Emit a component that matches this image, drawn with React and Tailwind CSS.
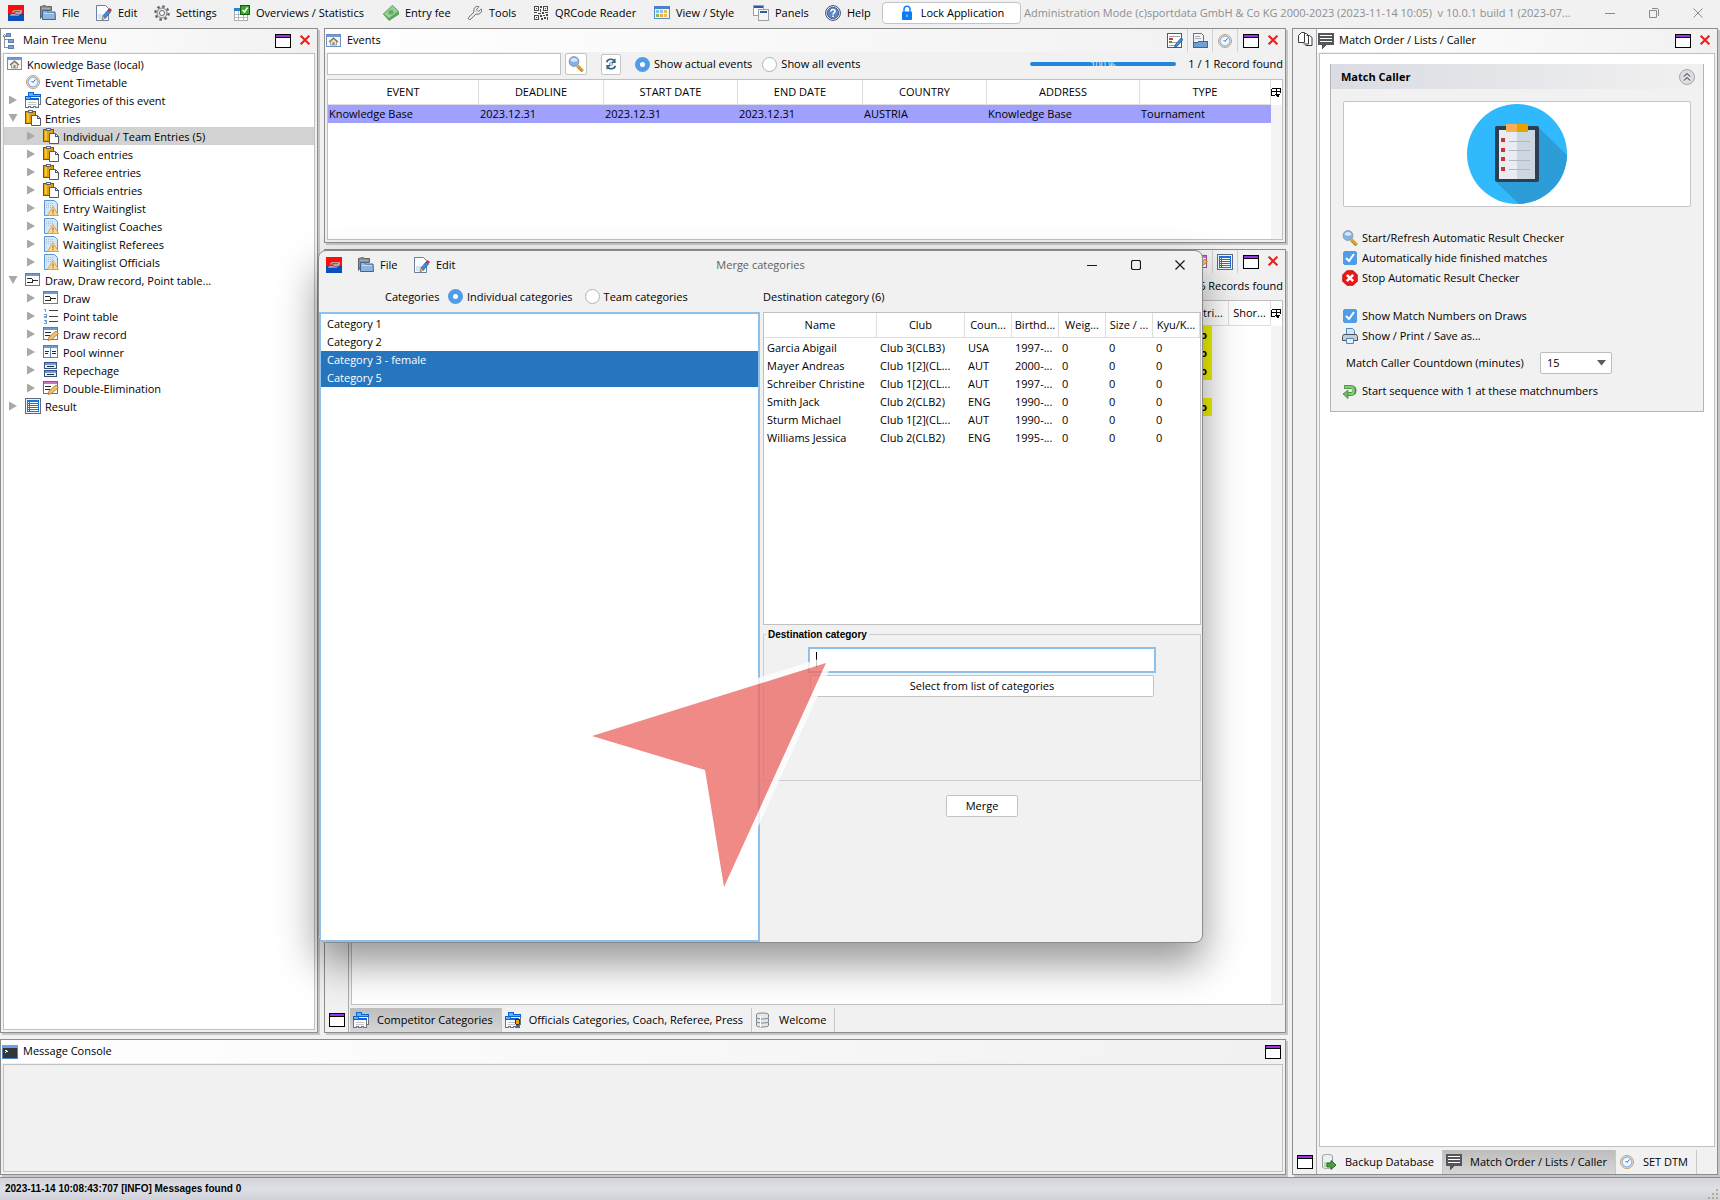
import React, { useState } from 'react';
import clsx from 'clsx';
import { Wrench } from 'lucide-react';

/* ---------- icons ---------- */

const Icon = ({ children, crisp = true, size = 16 }) => (
  <svg
    width={size}
    height={size}
    viewBox="0 0 16 16"
    className="block shrink-0"
    shapeRendering={crisp ? 'crispEdges' : 'auto'}
    aria-hidden="true"
  >
    {children}
  </svg>
);

const LogoIcon = () => (
  <Icon>
    <path fill="#fb0d0d" d="M0 0h16v9H0z" />
    <path fill="#0a4fc0" d="M0 10h16v6H0z" />
    <path fill="#2a3a8c" d="M0 9h16v1H0z" />
    <g shapeRendering="auto">
      <path fill="#b9a3a3" d="M4 6.500 6 5h8v2.500l-1.500 2H8L6 10.500H2L3 9h4l1-1.500H4z" />
      <path fill="#8d5d5d" d="M6 6h6v1H6z" />
      <path fill="#7f93bd" d="M2 10h9v1H2z" />
    </g>
  </Icon>
);

const FolderIcon = () => (
  <Icon crisp={false}>
    <path fill="#8b8f94" stroke="#5e6368" d="M.5 13.500V1.500L5 .5l1.500 1h5v4h-7z" />
    <path stroke="#a9adb1" d="M2 3.500h8M2 5.500h5" />
    <path fill="#8fb4dd" stroke="#3f6593" d="M2.500 14.500v-9h4l1 1.500h7.500l.5 7.500z" />
    <path stroke="#c4daf0" d="M4 8.500h10" />
  </Icon>
);

const EditIcon = () => (
  <Icon crisp={false}>
    <path fill="#fbfcfe" stroke="#6d7f9b" d="M.5.5h9l3 3v12H.5z" />
    <path fill="#d5e4f5" d="M2 9h9v5H2z" />
    <path fill="#3d8ee0" stroke="#1d4f94" strokeWidth=".7" d="m7 11 5-6 2.500 2-5 6z" />
    <path fill="#e8252a" d="m12 5 1.500-2L16 5l-1.500 2z" />
    <path fill="#f3cf6b" stroke="#5d4a16" strokeWidth=".5" d="m7 11 2.500 2-3.500 2z" />
  </Icon>
);

const GearIcon = () => (
  <Icon crisp={false}>
    <circle cx="8" cy="8" r="6.600" fill="none" stroke="#65696e" strokeWidth="2.400" strokeDasharray="2.600 2.580" />
    <circle cx="8" cy="8" r="5" fill="#e3e5e8" stroke="#7d8186" />
    <circle cx="8" cy="8" r="2.500" fill="#fff" stroke="#65696e" />
  </Icon>
);

const StatsIcon = () => (
  <Icon>
    <path fill="#fff" stroke="#a9adb3" d="M.5 3.500h13v12H.5z" />
    <path fill="#2186d8" d="M0 3h8v3H0z" />
    <path stroke="#b6bbc2" d="M1 9.500h12M1 12.500h12M4.500 6v9M9.500 6v9" />
    <path fill="#39a62c" stroke="#12600e" d="M6.500.5h9v9h-9z" />
    <path fill="none" stroke="#fff" strokeWidth="1.500" shapeRendering="auto" d="m8.500 5 2 2 3-4.500" />
  </Icon>
);

const MoneyIcon = () => (
  <Icon crisp={false}>
    <path fill="#5aa55e" d="M0 9 9.500 0 16 6.500v3L6 16z" />
    <path fill="#97d095" stroke="#5aa55e" strokeWidth=".8" d="M.5 9 9.500.5l6 6L6 13.500z" />
    <ellipse cx="8" cy="7.300" rx="2.500" ry="2.200" fill="#5fab62" />
  </Icon>
);

const QrIcon = () => (
  <Icon>
    <g fill="none" stroke="#4a4a4a">
      <path d="M1.500 1.500h4v4h-4zM10.500 1.500h4v4h-4zM1.500 10.500h4v4h-4z" />
    </g>
    <path
      fill="#4a4a4a"
      d="M3 3h1v1H3zM12 3h1v1h-1zM3 12h1v1H3zM7 1h2v2H7zM7 4h1v3H7zM1 7h3v1H1zM5 8h3v1H5zM9 7h2v2H9zM12 7h3v1h-3zM7 10h2v2H7zM10 10h2v1h-2zM13 9h2v2h-2zM11 12h2v2h-2zM14 12h1v3h-1zM8 13h2v2H8z"
    />
  </Icon>
);

const ViewIcon = () => (
  <Icon>
    <path fill="#eef5fd" stroke="#5c8ad0" d="M.5 1.500h15v12H.5z" />
    <path fill="#4a80cf" d="M0 1h16v3H0z" />
    <path fill="#86bff0" d="M2 5h3v3H2zM6 5h3v3H6z" />
    <path fill="#e9c33f" d="M10 5h3v3h-3zM10 9h3v3h-3z" />
    <path fill="#7fbd53" d="M2 9h3v3H2z" />
    <path fill="#f0a34d" d="M6 9h3v3H6z" />
  </Icon>
);

const PanelsIcon = () => (
  <Icon>
    <path fill="#fff" stroke="#9ba0a6" d="M.5.500h10v10H.5z" />
    <path fill="#2c5aa6" d="M1 1h9v2H1z" />
    <path fill="#f4f4f4" stroke="#9ba0a6" d="M5.500 4.500h10v11h-10z" />
    <path fill="#2c5aa6" d="M7 6h7v2H7z" />
  </Icon>
);

const HelpIcon = () => (
  <Icon crisp={false}>
    <circle cx="8" cy="8" r="7.400" fill="#fff" stroke="#33496e" />
    <circle cx="8" cy="8" r="5.800" fill="#5f86c2" stroke="#2e4c80" strokeWidth=".8" />
    <path fill="none" stroke="#fff" strokeWidth="1.600" d="M6 6.500c0-3 4-2.500 4 0 0 1.500-2 1.300-2 3M8 10.600v1.500" />
  </Icon>
);

const LockIcon = () => (
  <Icon crisp={false}>
    <path fill="none" stroke="#0a84ff" strokeWidth="1.500" d="M5 7V4.500c0-4.300 6-4.300 6 0V7" />
    <rect x="3" y="6.500" width="10" height="8.500" rx="1" fill="#0a7cf5" />
    <path stroke="#cfe6ff" d="M8 9.500v2.500" />
  </Icon>
);

const TreeIcon = () => (
  <Icon>
    <path fill="none" stroke="#8390a3" d="M2.500 3v11.500M2 6.500h4M2 14.500h4M1 3.500l1.500-2L4 3.500" />
    <path fill="#7ea3cf" stroke="#5d7fae" d="M4.500.5h4v3h-4zM6.500 6.500h5v3h-5zM6.500 12.500h5v3h-5z" />
  </Icon>
);

const HomeIcon = () => (
  <Icon>
    <path fill="#f4f9ff" stroke="#6d8fbf" d="M.5 1.500h14v12H.5z" />
    <path fill="#6b9bdc" d="M1 2h13v2H1z" />
    <g shapeRendering="auto">
      <path fill="#f3e6cf" stroke="#8b8173" strokeWidth=".7" d="M4.500 12V8.500L7.500 6l3 2.500V12z" />
      <path fill="none" stroke="#8d6b45" strokeWidth="1.200" d="M3 9l4.500-4L12 9" />
      <path fill="#7b8ba0" d="M6.500 9h2v3h-2z" />
    </g>
  </Icon>
);

const ClockIcon = () => (
  <Icon crisp={false}>
    <circle cx="8" cy="8" r="6.500" fill="#fff" stroke="#c99b64" />
    <circle cx="8" cy="8" r="5" fill="#f1f7fd" stroke="#8fb6e0" strokeWidth="1.400" />
    <path fill="none" stroke="#3d6aa6" strokeWidth="1" d="M10.500 5.500 8 8.500 6.500 7" />
  </Icon>
);

const CategoriesIcon = ({ badge }) => (
  <Icon>
    <path fill="#fff" stroke="#6b7280" d="M4.500 3.500h11v9h-11z" />
    <path fill="#5ab4f7" stroke="#0a63d1" d="M3.500.500h5v2h7v2h-12z" />
    <path fill="#fbfbfb" stroke="#6b7280" d="M.5 6.500h13v9h-3v-1h-2v1h-3v-1h-2v1h-3z" />
    <path fill="#5ab4f7" stroke="#0a63d1" d="M.5 4.500h5v2h8v1H.5z" />
    <path stroke="#c3c7cd" d="M3 10.500h8M3 12.500h8" />
    {badge && <path fill="#f0ab00" stroke="#3c2c00" d="M10.500 7.500h4v4l-1 1h-2l-1-1z" />}
    {badge && <path fill="#2b6fd0" d="M11 13h4v3h-4z" />}
  </Icon>
);

const ClipboardIcon = () => (
  <Icon>
    <path fill="#e6a100" stroke="#7c5500" d="M.5 1.500h10v12H.5z" />
    <path fill="#f6c544" d="M2 3h2v9H2z" />
    <path fill="#e4e9ef" stroke="#5c6673" d="M3.500.5h4v2h-4z" />
    <path fill="#fff" stroke="#4e5a6b" shapeRendering="auto" d="M6.500 5.500h6l3 3v7h-9z" />
    <path fill="none" stroke="#4e5a6b" d="M12.500 5.500v3h3" />
  </Icon>
);

const WaitingIcon = () => (
  <Icon crisp={false}>
    <path fill="#d3e7f9" stroke="#5b95d3" d="M1.500.500h10l3 3v12h-13z" />
    <path stroke="#9cc3ea" strokeDasharray="1 1" d="M3 3.500h7M3 5.500h7M3 7.500h6" />
    <path fill="#f9d890" stroke="#d9a04a" strokeWidth=".9" d="m10 6.500 5.500 9H4.500z" />
    <path stroke="#8a5f1a" strokeWidth="1" d="M10 9.500v3M10 13.300v1.200" />
  </Icon>
);

const FrameBase = ({ bar = '#6d9ad8', line = '#5d7eae' }) => (
  <>
    <path fill="#fdfdfe" stroke={line} d="M.5 1.500h14v12H.5z" />
    <path fill={bar} d="M1 2h13v2H1z" />
  </>
);

const DrawIcon = () => (
  <Icon>
    <FrameBase />
    <path fill="none" stroke="#2a2a2a" d="M2 6.500h5M2 10.500h5M7.500 6.500v4M8 8.500h5" />
  </Icon>
);

const PencilFrameIcon = ({ bar, line }) => (
  <Icon>
    <FrameBase bar={bar} line={line} />
    <path stroke="#2a2a2a" d="M2 6.500h6M2 9.500h5" />
    <path fill="#f4c069" stroke="#a9732a" strokeWidth=".8" shapeRendering="auto" d="m6 11 7-6 2.500 2.500-7 6-3.500 1z" />
  </Icon>
);

const PointIcon = () => (
  <Icon>
    <path stroke="#444" d="M6 2.500h9M6 8.500h9M6 13.500h9" />
    <path fill="none" stroke="#6f9fd6" d="M1 1.500h1.500V4M1 6.500h2v1.500H1.500v1.500H4M1 12h2v3.500H1M1.500 13.500H3" />
  </Icon>
);

const PoolIcon = () => (
  <Icon>
    <FrameBase />
    <path stroke="#2a2a2a" d="M2 7.500h4M9 7.500h4M9 9.500h4M2 9.500h3" />
    <path stroke="#5e86c4" d="M7.500 4v9" />
  </Icon>
);

const RepechageIcon = () => (
  <Icon>
    <path fill="#e7effa" stroke="#35527f" d="M1.500.5h12v6h-12zM1.500 8.500h12v6h-12z" />
    <path fill="#6d9ad8" d="M2 1h11v2H2zM2 9h11v2H2z" />
    <path stroke="#2a2a2a" d="M4 4.500h7M4 12.500h7" />
  </Icon>
);

const ListIcon = () => (
  <Icon>
    <path fill="#eaf3ff" stroke="#5b6b82" d="M.5.500h15v15H.5z" />
    <path fill="#1476e6" d="M2 2h12v12H2z" />
    <path stroke="#fff" d="M5 4.500h8M5 6.500h8M5 8.500h8M5 10.500h8M5 12.500h8M3 4.500h1M3 6.500h1M3 8.500h1M3 10.500h1M3 12.500h1" />
  </Icon>
);

const WindowIcon = () => (
  <Icon>
    <path fill="#fff" stroke="#000" d="M.5 1.500h15v13H.5z" />
    <path fill="#a033e8" d="M1 2h14v2H1z" />
    <path stroke="#000" d="M1 4.500h14" />
  </Icon>
);

const CloseIcon = () => (
  <Icon size={10} crisp={false}>
    <path stroke="#ee1c1c" strokeWidth="3.200" d="M1 1l14 14M15 1 1 15" />
  </Icon>
);

const ReportIcon = () => (
  <Icon>
    <path fill="#fff" stroke="#555b63" d="M.5.500h14v14H.5z" />
    <path stroke="#9fa5ad" d="M2 3.500h11M2 9.500h8M2 12.500h8" />
    <path fill="#d33" d="M2 5h4v2H2z" />
    <path fill="#3a9c3a" d="M2 8h3v2H2z" />
    <path fill="#3d8ee0" stroke="#1d4f94" strokeWidth=".7" shapeRendering="auto" d="m8 12 6-7 2 1.500-6 7-2.500 1z" />
  </Icon>
);

const ArchiveIcon = () => (
  <Icon>
    <path fill="#f2f4f7" stroke="#6b7482" d="M1.500 12.500V.5h8l2 2v6" />
    <path stroke="#a3abb7" d="M3 3.500h5M3 5.500h6" />
    <path fill="#6f9fd4" stroke="#3d679b" d="M1.500 14.500v-5h4l1-1h9v6z" />
  </Icon>
);

const ChatIcon = () => (
  <Icon>
    <path fill="#55555a" d="M0 0h16v12H8l-4 4v-4H0z" />
    <path stroke="#fff" d="M2 2.500h12M2 5.500h12M2 8.500h12" />
  </Icon>
);

const PagesIcon = () => (
  <Icon crisp={false}>
    <path fill="#fff" stroke="#3a3a3a" d="M9.500 4.500h3l2.500 2v8H8.500M6.500 2.500h3l2 2v8.500H6.500" />
    <path fill="#fff" stroke="#3a3a3a" d="M4.500 1.500h3v10h-6v-7z" />
  </Icon>
);

const ConsoleIcon = () => (
  <Icon>
    <path fill="#33363a" stroke="#4d86c9" d="M.5 1.500h15v13H.5z" />
    <path fill="#6aa2e4" d="M0 1h16v3H0z" />
    <path fill="none" stroke="#fff" d="M3 6l2 1.500L3 9" />
  </Icon>
);

const SearchIcon = () => (
  <Icon crisp={false}>
    <path stroke="#e0a030" strokeWidth="3" d="m9.500 9.500 5.500 5.500" />
    <path stroke="#8a5a10" strokeWidth=".8" d="m8.500 11 5.500 5" />
    <circle cx="6" cy="5.500" r="4.800" fill="#7fb2e8" stroke="#8fa3b8" strokeWidth="1.200" />
    <path fill="#d5e8fa" d="M2.500 5c0-4 7-4 7 0-2 1-5 1-7 0z" />
  </Icon>
);

const RefreshIcon = () => (
  <Icon crisp={false} size={14}>
    <g fill="none" stroke="#2e6483" strokeWidth="1.800">
      <path d="M3 6c1-4.500 8-4.500 9-.5M13 10c-1 4.500-8 4.500-9 .5" />
      <path d="M12.500 2v4H9M3.500 14v-4H7" strokeWidth="1.500" />
      <path d="M6 8l2-2 2 2-2 2z" strokeWidth="1" />
    </g>
  </Icon>
);

const StopIcon = () => (
  <Icon crisp={false}>
    <path fill="#ef1616" stroke="#c01010" d="M4.800.8h6.400l4 4v6.400l-4 4H4.800l-4-4V4.800z" />
    <path stroke="#fff" strokeWidth="2.600" d="m4.800 4.800 6.400 6.400M11.200 4.800l-6.400 6.400" />
  </Icon>
);

const PrinterIcon = () => (
  <Icon crisp={false}>
    <path fill="#cfe5fa" stroke="#4d86c9" d="M4.500 7V.5h6l2 2V7z" />
    <path fill="#c9ccd1" stroke="#4d5258" d="M1.500 6.500h13l1 2v4h-15v-4z" />
    <path fill="#e6f1fc" stroke="#4d86c9" d="M4.500 10.500h7v5h-7z" />
  </Icon>
);

const ReturnIcon = () => (
  <Icon crisp={false}>
    <path fill="none" stroke="#3e8b37" strokeWidth="4.200" d="M2 4h7c4.500 0 4.500 7 0 7H5" />
    <path fill="none" stroke="#86c97c" strokeWidth="2.600" d="M2.500 4H9c3.500 0 3.500 7 0 7H5" />
    <path fill="#6fbb64" stroke="#3e8b37" strokeWidth=".8" d="M6 7v8.500L1 11z" />
  </Icon>
);

const DatabaseIcon = () => (
  <Icon crisp={false}>
    <g fill="#e4e8ec" stroke="#7b828b">
      <path d="M1.500 10.500v3c0 2 12 2 12 0v-3z" />
      <path d="M1.500 6.500v3c0 2 12 2 12 0v-3z" />
      <path d="M1.500 2.500v3c0 2 12 2 12 0v-3c0-2-12-2-12 0z" />
    </g>
    <path stroke="#fff" d="M5.500 4v11" />
  </Icon>
);

const BackupIcon = () => (
  <Icon crisp={false}>
    <path fill="#eef0f2" stroke="#9aa0a6" d="M1.500 2c0-2 10-2 10 0v11c0 2-10 2-10 0z" />
    <path fill="#b9dcb0" d="M3 8h7v5H3z" />
    <path fill="#4ca03f" stroke="#24641c" strokeWidth=".9" d="M6 9h4V6.500l5 4.500-5 4.500V13H6z" />
  </Icon>
);

const ColumnControlIcon = () => (
  <Icon size={10}>
    <path fill="none" stroke="#000" strokeWidth="1.600" d="M1 1h14v7M1 1v11h6M1 5h14M8 1v8" />
    <path fill="#000" d="M6 9h10l-5 6z" />
  </Icon>
);

const ClipboardPicture = () => (
  <svg width="100" height="100" viewBox="0 0 100 100" className="block" aria-hidden="true">
    <circle cx="50" cy="50" r="50" fill="#31b9fd" />
    <path fill="#2d9dd7" d="M72 24 100 51A50 50 0 0 1 52 100L29 78z" />
    <rect x="28" y="22" width="44" height="56" rx="2" fill="#2b3e52" />
    <path fill="#e9edf3" d="M32 26h18v49H32z" />
    <path fill="#cdd7e2" d="M50 26h18v49H50z" />
    <path fill="#f9b050" d="M39 20h11v8H39z" />
    <path fill="#e8a200" d="M50 20h11v8H50z" />
    <path fill="#d2322e" d="M34 34h4v4h-4zM34 44h4v4h-4zM34 53h4v4h-4zM34 63h4v4h-4z" />
    <path stroke="#b4b9c0" strokeWidth="1" d="M42 37.500h21M42 46.500h21M42 56.500h21M42 65.500h21" />
  </svg>
);

/* ---------- data ---------- */

const MENU = [
  { label: 'File', icon: FolderIcon, width: 'w-[56px]' },
  { label: 'Edit', icon: EditIcon, width: 'w-[58px]' },
  { label: 'Settings', icon: GearIcon, width: 'w-[80px]' },
  { label: 'Overviews / Statistics', icon: StatsIcon, width: 'w-[149px]' },
  { label: 'Entry fee', icon: MoneyIcon, width: 'w-[84px]' },
  { label: 'Tools', icon: () => <Wrench size={16} color="#6f7378" fill="#e8eaec" strokeWidth={1.5} />, width: 'w-[66px]' },
  { label: 'QRCode Reader', icon: QrIcon, width: 'w-[121px]' },
  { label: 'View / Style', icon: ViewIcon, width: 'w-[99px]' },
  { label: 'Panels', icon: PanelsIcon, width: 'w-[72px]' },
  { label: 'Help', icon: HelpIcon, width: 'w-[57px]' },
];

const MagentaPencilIcon = () => <PencilFrameIcon bar="#d06fcc" line="#a0489c" />;

const TREE = [
  { level: 0, label: 'Knowledge Base (local)', icon: HomeIcon },
  { level: 1, label: 'Event Timetable', icon: ClockIcon },
  { level: 1, label: 'Categories of this event', icon: CategoriesIcon, arrow: 'right' },
  { level: 1, label: 'Entries', icon: ClipboardIcon, arrow: 'down' },
  { level: 2, label: 'Individual / Team Entries (5)', icon: ClipboardIcon, arrow: 'right', selected: true },
  { level: 2, label: 'Coach entries', icon: ClipboardIcon, arrow: 'right' },
  { level: 2, label: 'Referee entries', icon: ClipboardIcon, arrow: 'right' },
  { level: 2, label: 'Officials entries', icon: ClipboardIcon, arrow: 'right' },
  { level: 2, label: 'Entry Waitinglist', icon: WaitingIcon, arrow: 'right' },
  { level: 2, label: 'Waitinglist Coaches', icon: WaitingIcon, arrow: 'right' },
  { level: 2, label: 'Waitinglist Referees', icon: WaitingIcon, arrow: 'right' },
  { level: 2, label: 'Waitinglist Officials', icon: WaitingIcon, arrow: 'right' },
  { level: 1, label: 'Draw, Draw record, Point table...', icon: DrawIcon, arrow: 'down' },
  { level: 2, label: 'Draw', icon: DrawIcon, arrow: 'right' },
  { level: 2, label: 'Point table', icon: PointIcon, arrow: 'right' },
  { level: 2, label: 'Draw record', icon: PencilFrameIcon, arrow: 'right' },
  { level: 2, label: 'Pool winner', icon: PoolIcon, arrow: 'right' },
  { level: 2, label: 'Repechage', icon: RepechageIcon, arrow: 'right' },
  { level: 2, label: 'Double-Elimination', icon: MagentaPencilIcon, arrow: 'right' },
  { level: 1, label: 'Result', icon: ListIcon, arrow: 'right' },
];

const EVENT_COLUMNS = [
  { label: 'EVENT', width: 'w-[151px]', value: 'Knowledge Base' },
  { label: 'DEADLINE', width: 'w-[125px]', value: '2023.12.31' },
  { label: 'START DATE', width: 'w-[134px]', value: '2023.12.31' },
  { label: 'END DATE', width: 'w-[125px]', value: '2023.12.31' },
  { label: 'COUNTRY', width: 'w-[124px]', value: 'AUSTRIA' },
  { label: 'ADDRESS', width: 'w-[153px]', value: 'Knowledge Base' },
  { label: 'TYPE', width: 'w-[131px]', value: 'Tournament' },
];

const CATEGORIES = ['Category 1', 'Category 2', 'Category 3 - female', 'Category 5'];

const MEMBER_COLUMNS = [
  { label: 'Name', width: 'w-[113px]' },
  { label: 'Club', width: 'w-[88px]' },
  { label: 'Coun...', width: 'w-[47px]' },
  { label: 'Birthd...', width: 'w-[47px]' },
  { label: 'Weig...', width: 'w-[47px]' },
  { label: 'Size / ...', width: 'w-[47px]' },
  { label: 'Kyu/K...', width: 'w-[47px]' },
];

const MEMBERS = [
  ['Garcia Abigail', 'Club 3(CLB3)', 'USA', '1997-...', '0', '0', '0'],
  ['Mayer Andreas', 'Club 1[2](CL...', 'AUT', '2000-...', '0', '0', '0'],
  ['Schreiber Christine', 'Club 1[2](CL...', 'AUT', '1997-...', '0', '0', '0'],
  ['Smith Jack', 'Club 2(CLB2)', 'ENG', '1990-...', '0', '0', '0'],
  ['Sturm Michael', 'Club 1[2](CL...', 'AUT', '1990-...', '0', '0', '0'],
  ['Williams Jessica', 'Club 2(CLB2)', 'ENG', '1995-...', '0', '0', '0'],
];

/* ---------- shared pieces ---------- */

const MenuButton = ({ item }) => (
  <button className={clsx('flex h-full shrink-0 items-center gap-1.5 whitespace-nowrap', item.width)}>
    <item.icon />
    {item.label}
  </button>
);

const ToolCell = ({ label, children, divider }) => (
  <button
    aria-label={label}
    className={clsx('flex h-full w-[25px] items-center justify-center', divider && 'border-r border-[#d0d0d0]')}
  >
    {children}
  </button>
);

const TitleBar = ({ icon, title, tools, closable = true }) => (
  <div className="flex h-[23px] shrink-0 items-center bg-linear-to-r from-white to-[#f1f1f1] pl-px">
    {icon}
    <h2 className="grow pb-0.5 pl-[5px]">{title}</h2>
    {tools}
    <ToolCell label="Maximize panel">
      <WindowIcon />
    </ToolCell>
    {closable && (
      <button aria-label="Close panel" className="flex h-full w-[22px] items-center pb-0.5 pl-[5px]">
        <CloseIcon />
      </button>
    )}
  </div>
);

const Panel = ({ className, children }) => (
  <section className={clsx('flex min-h-0 border border-[#8c8c8c] bg-[#f1f1f1] shadow-[2px_2px_0_#c6c6c6]', className)}>
    {children}
  </section>
);

const Radio = ({ name, label, checked, onChange }) => (
  <label className="flex items-center gap-1 whitespace-nowrap">
    <input
      type="radio"
      name={name}
      checked={checked}
      onChange={onChange}
      className="size-[15px] appearance-none rounded-full border border-[#b4b4b4] bg-white checked:border-5 checked:border-[#4f9de8]"
    />
    {label}
  </label>
);

const CheckRow = ({ label }) => (
  <label className="flex h-5 items-center gap-1">
    <span className="grid w-4 place-items-center">
      <input
        type="checkbox"
        defaultChecked
        className="col-start-1 row-start-1 size-[14px] appearance-none rounded-xs border border-[#b4b4b4] bg-white checked:border-[#4f9de8] checked:bg-[#4f9de8]"
      />
      <svg width="14" height="14" viewBox="0 0 14 14" className="pointer-events-none col-start-1 row-start-1">
        <path fill="none" stroke="#fff" strokeWidth="2" d="m3 7 3 3 5-7" />
      </svg>
    </span>
    {label}
  </label>
);

const Tab = ({ icon, label, active }) => (
  <button
    role="tab"
    aria-selected={!!active}
    className={clsx(
      'flex h-6 items-center gap-2 whitespace-nowrap border-r border-[#c8c8c8] pl-[3px] pr-2',
      active && 'bg-linear-to-b from-[#bdbdbd] to-[#d6d6d6]'
    )}
  >
    {icon}
    {label}
  </button>
);

const SideStrip = ({ top }) => (
  <div className="flex w-6 shrink-0 flex-col items-center justify-between border-r border-[#a8a8a8] pt-0.5 pb-1">
    <span>{top}</span>
    <button aria-label="Restore panel">
      <WindowIcon />
    </button>
  </div>
);

const HeaderCell = ({ children, className }) => (
  <th className={clsx('h-[25px] overflow-hidden border-r border-b border-[#dedede] bg-white p-0 font-normal whitespace-nowrap', className)}>
    {children}
  </th>
);

/* ---------- panels ---------- */

const MenuBar = () => (
  <header className="flex h-7 shrink-0 items-center pb-0.5 pl-2">
    <LogoIcon />
    <nav className="flex h-full items-center pl-4">
      {MENU.map((item) => (
        <MenuButton key={item.label} item={item} />
      ))}
    </nav>
    <button className="flex h-[22px] w-[139px] shrink-0 items-center justify-center gap-1.5 rounded-sm border border-[#c4c4c4] bg-white whitespace-nowrap">
      <LockIcon />
      Lock Application
    </button>
    <span className="grow truncate pl-[3px] whitespace-pre text-[#8e8e8e]">
      Administration Mode (c)sportdata GmbH &amp; Co KG 2000-2023 (2023-11-14 10:05){'  '}v 10.0.1 build 1 (2023-07...
    </span>
    <div className="flex h-full shrink-0 items-center">
      {[
        ['Minimize', 'M0 5.500h10'],
        ['Restore', 'M.5 2.500h7v7h-7zM3 .5h5.500l1 1V8'],
        ['Close', 'M.5.5l9 9M9.500.5l-9 9'],
      ].map(([label, d]) => (
        <button key={label} aria-label={label} className="flex h-full w-11 items-center justify-center">
          <svg width="10" height="10" viewBox="0 0 10 10" className="block">
            <path fill="none" stroke="#8a8a8a" d={d} />
          </svg>
        </button>
      ))}
    </div>
  </header>
);

const Arrow = ({ direction }) => (
  <svg width="10" height="10" viewBox="0 0 10 10" className="block" aria-hidden="true">
    {direction === 'right' && <path fill="#a9a9a9" d="M1 0.500 9 5 1 9.500z" />}
    {direction === 'down' && <path fill="#a9a9a9" d="M.5 1h9L5 9z" />}
  </svg>
);

const TreePanel = () => (
  <Panel className="w-[318px] shrink-0 flex-col">
    <TitleBar icon={<TreeIcon />} title="Main Tree Menu" />
    <ul role="tree" className="mx-0.5 mt-px mb-0.5 grow border border-[#c0c0c0] bg-white pt-px">
      {TREE.map((node) => (
        <li
          key={node.label}
          role="treeitem"
          aria-selected={!!node.selected}
          className={clsx(
            'flex h-[18px] items-center gap-1 whitespace-nowrap',
            node.level === 0 && 'pl-[3px]',
            node.level === 1 && 'pl-1',
            node.level === 2 && 'pl-[22px]',
            node.selected && 'bg-[#d2d2d2]'
          )}
        >
          {node.level > 0 && (
            <span className="w-[13px]">
              <Arrow direction={node.arrow} />
            </span>
          )}
          <node.icon />
          <span className="pt-0.5">{node.label}</span>
        </li>
      ))}
    </ul>
  </Panel>
);

const EventsPanel = () => {
  const [scope, setScope] = useState('actual');

  return (
    <Panel className="h-[215px] shrink-0 flex-col">
      <TitleBar
        icon={<HomeIcon />}
        title="Events"
        tools={
          <>
            <ToolCell label="Report" divider><ReportIcon /></ToolCell>
            <ToolCell label="Archive" divider><ArchiveIcon /></ToolCell>
            <ToolCell label="Timetable" divider><ClockIcon /></ToolCell>
          </>
        }
      />
      <div className="flex h-[26px] items-center px-0.5 pb-0.5">
        <input aria-label="Search events" className="h-[22px] w-[234px] border border-[#c0c0c0] bg-white px-1 outline-none" />
        <button aria-label="Search" className="ml-1 flex h-[22px] w-[22px] items-center justify-center rounded-xs border border-[#c4c4c4] bg-white">
          <SearchIcon />
        </button>
        <button aria-label="Refresh" className="ml-3.5 flex h-[21px] w-5 items-center justify-center rounded-xs border border-[#c4c4c4] bg-white">
          <RefreshIcon />
        </button>
        <div className="flex gap-2.5 pl-3.5">
          <Radio name="scope" label="Show actual events" checked={scope === 'actual'} onChange={() => setScope('actual')} />
          <Radio name="scope" label="Show all events" checked={scope === 'all'} onChange={() => setScope('all')} />
        </div>
        <div
          role="progressbar"
          aria-valuenow={100}
          className="ml-auto flex h-1 w-[146px] items-center justify-center rounded-full bg-[#1f87dd] text-[9px] leading-none text-[#f1f1f1]"
        >
          100 %
        </div>
        <span className="w-[107px] text-right whitespace-nowrap">1 / 1 Record found</span>
      </div>
      <div className="mx-0.5 mt-px mb-0.5 flex grow border border-[#c0c0c0] bg-white">
        <div className="grow">
          <table className="w-full table-fixed border-separate border-spacing-0">
            <thead>
              <tr>
                {EVENT_COLUMNS.map((col) => (
                  <HeaderCell key={col.label} className={col.width}>{col.label}</HeaderCell>
                ))}
              </tr>
            </thead>
            <tbody>
              <tr className="h-[18px] bg-[#a0a0ff]">
                {EVENT_COLUMNS.map((col) => (
                  <td key={col.label} className="p-0 pl-px">{col.value}</td>
                ))}
              </tr>
            </tbody>
          </table>
        </div>
        <div className="w-[11px] shrink-0 bg-[#f4f4f4]">
          <button aria-label="Choose columns" className="flex h-[25px] w-full items-center bg-white">
            <ColumnControlIcon />
          </button>
        </div>
      </div>
    </Panel>
  );
};

const CompetitorPanel = () => (
  <Panel className="grow">
    <SideStrip />
    <div className="flex grow flex-col">
      <TitleBar
        title=""
        tools={
          <>
            <ToolCell label="Double elimination" divider><MagentaPencilIcon /></ToolCell>
            <ToolCell label="List" divider><ListIcon /></ToolCell>
          </>
        }
      />
      <div className="flex h-[27px] items-center justify-end pr-0.5 pb-0.5">6 Records found</div>
      <div className="mx-0.5 mb-0.5 flex grow border border-[#c0c0c0] bg-white">
        <div className="flex grow items-start justify-end">
          <table className="w-[86px] table-fixed border-separate border-spacing-0">
            <thead>
              <tr>
                <HeaderCell className="w-[44px]">Entri...</HeaderCell>
                <HeaderCell className="w-[42px]">Shor...</HeaderCell>
              </tr>
            </thead>
            <tbody>
              {[true, true, true, false, true].map((open, i) => (
                <tr key={i} className="h-[18px]">
                  <td className="p-0">
                    {open && <div className="h-[18px] w-[27px] bg-[#f4f400] pr-[5px] text-right font-bold">No</div>}
                  </td>
                  <td className="p-0" />
                </tr>
              ))}
            </tbody>
          </table>
        </div>
        <div className="w-[11px] shrink-0 bg-[#f4f4f4]">
          <button aria-label="Choose columns" className="flex h-[25px] w-full items-center bg-white">
            <ColumnControlIcon />
          </button>
        </div>
      </div>
      <div role="tablist" className="flex h-[25px] shrink-0 items-end pl-px">
        <Tab icon={<CategoriesIcon />} label="Competitor Categories" active />
        <Tab icon={<CategoriesIcon badge />} label="Officials Categories, Coach, Referee, Press" />
        <Tab icon={<DatabaseIcon />} label="Welcome" />
      </div>
    </div>
  </Panel>
);

const ConsolePanel = () => (
  <Panel className="h-[136px] shrink-0 flex-col">
    <TitleBar icon={<ConsoleIcon />} title="Message Console" closable={false} />
    <div className="mx-0.5 mt-px mb-0.5 grow border border-[#c0c0c0]" />
  </Panel>
);

const ActionRow = ({ icon, label }) => (
  <button className="flex h-5 items-center gap-1">
    {icon}
    {label}
  </button>
);

const MatchCallerPanel = () => (
  <Panel className="w-[426px] shrink-0">
    <SideStrip top={<PagesIcon />} />
    <div className="flex grow flex-col">
      <TitleBar icon={<ChatIcon />} title="Match Order / Lists / Caller" />
      <div className="mx-0.5 mt-px mb-0.5 grow border border-[#c0c0c0] bg-white px-2.5 pt-2.5">
        <div className="border border-t-0 border-[#b4b4b4] bg-[#f1f1f1]">
          <div className="flex h-[25px] items-center justify-between bg-linear-to-r from-[#dadce3] to-[#f1f1f1] pr-2 pl-2.5">
            <h3 className="font-bold">Match Caller</h3>
            <button aria-label="Collapse" className="flex size-4 items-center justify-center rounded-full border border-[#a8a8a8] bg-[#dcdde2]">
              <svg width="8" height="10" viewBox="0 0 8 10" className="block">
                <path fill="none" stroke="#222" d="M1 4.500 4 1.500l3 3M1 8.500l3-3 3 3" />
              </svg>
            </button>
          </div>
          <div className="px-3 pt-3 pb-2.5">
            <button aria-label="Match list" className="flex h-[106px] w-full items-center justify-center rounded-xs border border-[#c4c4c4] bg-white">
              <ClipboardPicture />
            </button>
            <div className="-ml-px mt-[21px] flex flex-col items-start">
              <ActionRow icon={<SearchIcon />} label="Start/Refresh Automatic Result Checker" />
              <CheckRow label="Automatically hide finished matches" />
              <ActionRow icon={<StopIcon />} label="Stop Automatic Result Checker" />
              <div className="h-[18px]" />
              <CheckRow label="Show Match Numbers on Draws" />
              <ActionRow icon={<PrinterIcon />} label="Show / Print / Save as..." />
              <div className="mt-1.5 mb-[7px] flex items-center gap-1.5 pl-1">
                <label htmlFor="countdown" className="w-[188px]">Match Caller Countdown (minutes)</label>
                <span className="grid items-center">
                  <select
                    id="countdown"
                    defaultValue="15"
                    className="col-start-1 row-start-1 h-[22px] w-[72px] appearance-none rounded-xs border border-[#bdbdbd] bg-white pl-1.5 outline-none"
                  >
                    <option>10</option>
                    <option>15</option>
                    <option>20</option>
                  </select>
                  <svg width="9" height="6" viewBox="0 0 9 6" className="pointer-events-none col-start-1 row-start-1 mr-1.5 justify-self-end">
                    <path fill="#5a5a5a" d="M0 0h9L4.500 5.500z" />
                  </svg>
                </span>
              </div>
              <ActionRow icon={<ReturnIcon />} label="Start sequence with 1 at these matchnumbers" />
            </div>
          </div>
        </div>
      </div>
      <div role="tablist" className="flex h-[25px] shrink-0 items-end pl-px">
        <Tab icon={<BackupIcon />} label="Backup Database" />
        <Tab icon={<ChatIcon />} label="Match Order / Lists / Caller" active />
        <Tab icon={<ClockIcon />} label="SET DTM" />
      </div>
    </div>
  </Panel>
);

/* ---------- dialog ---------- */

const MergeDialog = () => {
  const [kind, setKind] = useState('individual');
  const [selected, setSelected] = useState(['Category 3 - female', 'Category 5']);

  const toggle = (name) =>
    setSelected((prev) => (prev.includes(name) ? prev.filter((n) => n !== name) : [...prev, name]));

  return (
    <div
      role="dialog"
      aria-label="Merge categories"
      className="absolute top-[250px] left-[318px] flex h-[693px] w-[885px] flex-col overflow-hidden rounded-lg border border-[#8a8a8a] bg-[#f1f1f1] shadow-[0_20px_40px_rgba(0,0,0,0.42)]"
    >
      <div className="grid h-7 shrink-0 grid-cols-3 items-center">
        <div className="flex items-center pl-[7px]">
          <LogoIcon />
          <nav className="flex items-center pl-4">
            <MenuButton item={MENU[0]} />
            <MenuButton item={MENU[1]} />
          </nav>
        </div>
        <h2 className="text-center text-[#5f5f5f]">Merge categories</h2>
        <div className="flex h-full justify-end">
          {[
            ['Minimize', 'M0 5.500h10'],
            ['Maximize', 'M1.500.5h7l1 1v7l-1 1h-7l-1-1v-7z'],
            ['Close', 'M.5.5l9 9M9.500.5l-9 9'],
          ].map(([label, d]) => (
            <button key={label} aria-label={label} className="flex h-full w-11 items-center justify-center">
              <svg width="10" height="10" viewBox="0 0 10 10" className="block">
                <path fill="none" stroke="#1a1a1a" strokeWidth="1.200" d={d} />
              </svg>
            </button>
          ))}
        </div>
      </div>

      <div className="flex min-h-0 grow">
        <div className="flex w-[441px] shrink-0 flex-col">
          <div className="flex h-[33px] shrink-0 items-center pt-0.5 pl-[66px]">
            <span className="w-[63px]">Categories</span>
            <div className="flex gap-3">
              <Radio name="kind" label="Individual categories" checked={kind === 'individual'} onChange={() => setKind('individual')} />
              <Radio name="kind" label="Team categories" checked={kind === 'team'} onChange={() => setKind('team')} />
            </div>
          </div>
          <ul role="listbox" aria-multiselectable="true" className="grow border-2 border-[#8fbfeb] bg-white pt-px">
            {CATEGORIES.map((name) => (
              <li
                key={name}
                role="option"
                aria-selected={selected.includes(name)}
                onClick={() => toggle(name)}
                className={clsx('flex h-[18px] items-center pl-1.5', selected.includes(name) && 'bg-[#2675bf] text-white')}
              >
                {name}
              </li>
            ))}
          </ul>
        </div>

        <div className="flex grow flex-col pr-0.5 pl-[3px]">
          <div className="flex h-[33px] shrink-0 items-center pt-0.5">Destination category (6)</div>
          <div className="h-[313px] shrink-0 border border-[#c0c0c0] bg-white">
            <table className="w-full table-fixed border-separate border-spacing-0">
              <thead>
                <tr>
                  {MEMBER_COLUMNS.map((col) => (
                    <HeaderCell key={col.label} className={col.width}>{col.label}</HeaderCell>
                  ))}
                </tr>
              </thead>
              <tbody className="before:block before:h-px">
                {MEMBERS.map((row) => (
                  <tr key={row[0]} className="h-[18px]">
                    {row.map((value, i) => (
                      <td key={i} className="overflow-hidden p-0 pl-[3px] whitespace-nowrap">{value}</td>
                    ))}
                  </tr>
                ))}
              </tbody>
            </table>
          </div>
          <fieldset className="mt-px flex h-[155px] shrink-0 flex-col items-center border border-[#cdcdcd]">
            <legend className="ml-0.5 h-[17px] px-0.5 font-['Liberation_Sans',sans-serif] text-[10px] leading-[17px] font-bold">
              Destination category
            </legend>
            <input
              aria-label="Destination category"
              defaultValue=""
              className="mt-1 h-[26px] w-[348px] border-2 border-[#8fbfeb] bg-white px-1 outline-none"
            />
            <button className="mt-0.5 h-[22px] w-[344px] rounded-xs border border-[#c4c4c4] bg-white">
              Select from list of categories
            </button>
          </fieldset>
          <button className="mt-3.5 h-[22px] w-[72px] shrink-0 self-center rounded-xs border border-[#c4c4c4] bg-white">Merge</button>
        </div>
      </div>
    </div>
  );
};

/* pointer lying over the dialog, with the caret it points at */
const PointerArrow = () => (
  <svg width="260" height="250" viewBox="0 0 260 250" className="pointer-events-none absolute top-[650px] left-[585px]" aria-hidden="true">
    <path stroke="#000" d="M231.500 2v15" />
    <g opacity="0.79">
      <path
        fill="#ed6b67"
        stroke="#fff"
        strokeWidth="12"
        strokeLinejoin="bevel"
        paintOrder="stroke"
        d="M7 86 241 13 139 237 120 120z"
      />
    </g>
  </svg>
);

export default function App() {
  return (
    <div className="relative flex h-screen flex-col overflow-hidden bg-[#f1f1f1] font-['Open_Sans','Noto_Sans',sans-serif] text-[11px] leading-[18px] text-black">
      <MenuBar />
      <main className="flex min-h-0 grow gap-1.5 pr-0.5 pb-0.5">
        <div className="flex min-w-0 grow flex-col gap-1.5">
          <div className="flex min-h-0 grow gap-1.5">
            <TreePanel />
            <div className="flex min-w-0 grow flex-col gap-1.5">
              <EventsPanel />
              <CompetitorPanel />
            </div>
          </div>
          <ConsolePanel />
        </div>
        <MatchCallerPanel />
      </main>
      <footer className="flex h-[23px] shrink-0 items-center justify-between border-t border-[#8c8c8c] bg-linear-to-b from-[#d2d3d9] via-[#dfe0e6] to-[#d0d1d8] pl-[5px] font-['Liberation_Sans',sans-serif] text-[10px] font-bold">
        2023-11-14 10:08:43:707 [INFO] Messages found 0
        <svg width="12" height="12" viewBox="0 0 12 12" className="self-end" aria-hidden="true">
          <path fill="#b5ac98" d="M8 1h2v2H8zM8 5h2v2H8zM4 5h2v2H4zM8 9h2v2H8zM4 9h2v2H4zM0 9h2v2H0z" />
        </svg>
      </footer>
      <MergeDialog />
      <PointerArrow />
    </div>
  );
}
